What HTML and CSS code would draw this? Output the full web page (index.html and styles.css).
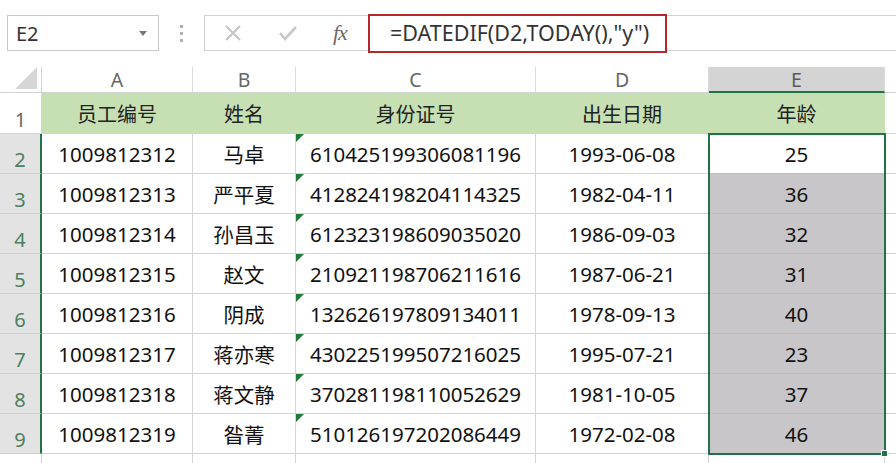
FILE: index.html
```html
<!DOCTYPE html>
<html>
<head>
<meta charset="utf-8">
<link rel="stylesheet" href="styles.css">
</head>
<body>
<div class="bar">
  <div class="namebox"><span>E2</span><svg class="dd" width="8" height="5" viewBox="0 0 8 5"><path d="M0 0h8L4 5z" fill="#777"/></svg></div>
  <div class="dots"><i></i><i></i><i></i></div>
  <div class="fbox">
    <svg class="ico x" width="18" height="18" viewBox="0 0 18 18"><path d="M2 2L16 16M16 2L2 16" stroke="#c4c4c4" stroke-width="2"/></svg>
    <svg class="ico ck" width="20" height="16" viewBox="0 0 20 16"><path d="M2 8l5 6L18 2" stroke="#c8c8c8" stroke-width="2.6" fill="none"/></svg>
    <span class="fx">fx</span>
    <div class="formula">=DATEDIF(D2,TODAY(),"y")</div>
  </div>
</div>
<div class="sheet">
  <div class="corner"><svg width="22" height="22" viewBox="0 0 22 22"><path d="M22 0V22H0z" fill="#d6d6d6"/></svg></div>
  <div class="ch">A</div><div class="ch">B</div><div class="ch">C</div><div class="ch">D</div><div class="ch sel">E</div><div class="ch end"></div>

  <div class="rh">1</div>
  <div class="c hd">员工编号</div><div class="c hd">姓名</div><div class="c hd">身份证号</div><div class="c hd">出生日期</div><div class="c hd">年龄</div><div class="c endc"></div>

  <div class="rh s">2</div><div class="c">1009812312</div><div class="c">马卓</div><div class="c t">610425199306081196</div><div class="c">1993-06-08</div><div class="c e active">25</div><div class="c endc"></div>
  <div class="rh s">3</div><div class="c">1009812313</div><div class="c">严平夏</div><div class="c t">412824198204114325</div><div class="c">1982-04-11</div><div class="c e">36</div><div class="c endc"></div>
  <div class="rh s">4</div><div class="c">1009812314</div><div class="c">孙昌玉</div><div class="c t">612323198609035020</div><div class="c">1986-09-03</div><div class="c e">32</div><div class="c endc"></div>
  <div class="rh s">5</div><div class="c">1009812315</div><div class="c">赵文</div><div class="c t">210921198706211616</div><div class="c">1987-06-21</div><div class="c e">31</div><div class="c endc"></div>
  <div class="rh s">6</div><div class="c">1009812316</div><div class="c">阴成</div><div class="c t">132626197809134011</div><div class="c">1978-09-13</div><div class="c e">40</div><div class="c endc"></div>
  <div class="rh s">7</div><div class="c">1009812317</div><div class="c">蒋亦寒</div><div class="c t">430225199507216025</div><div class="c">1995-07-21</div><div class="c e">23</div><div class="c endc"></div>
  <div class="rh s">8</div><div class="c">1009812318</div><div class="c">蒋文静</div><div class="c t">370281198110052629</div><div class="c">1981-10-05</div><div class="c e">37</div><div class="c endc"></div>
  <div class="rh s">9</div><div class="c">1009812319</div><div class="c">昝菁</div><div class="c t">510126197202086449</div><div class="c">1972-02-08</div><div class="c e last">46</div><div class="c endc"></div>

  <div class="rh"></div><div class="c"></div><div class="c"></div><div class="c"></div><div class="c"></div><div class="c"></div><div class="c endc"></div>
  <div class="range"><span class="handle"></span></div>
</div>
</body>
</html>
```

FILE: styles.css
```css
* { box-sizing: border-box; }
body {
  margin: 0;
  background: #fff;
  font-family: "Noto Sans", "Noto Sans CJK SC", sans-serif;
  color: #1a1a1a;
  width: 896px;
  height: 463px;
  overflow: hidden;
}
.bar {
  height: 67px;
  display: flex;
  align-items: flex-start;
  padding-top: 15px;
  padding-left: 7px;
}
.namebox {
  width: 152px;
  height: 36px;
  border: 1px solid #c8c8c8;
  display: flex;
  align-items: center;
  justify-content: space-between;
  padding: 0 11px 0 8px;
  font-size: 20px;
  color: #333;
}
.dd { margin-top: 1px; }
.dots {
  width: 45px;
  height: 36px;
  display: flex;
  flex-direction: column;
  align-items: center;
  justify-content: center;
  gap: 4px;
}
.dots i {
  display: block;
  width: 3px;
  height: 3px;
  background: #b0b0b0;
}
.fbox {
  flex: 1;
  height: 36px;
  border: 1px solid #d0d0d0;
  border-right: 0;
  display: flex;
  align-items: center;
  position: relative;
}
.ico.x { margin-left: 19px; }
.ico.ck { margin-left: 36px; }
.fx {
  margin-left: 35px;
  font-family: "Liberation Serif", serif;
  font-style: italic;
  font-size: 22px;
  color: #6a6a6a;
  letter-spacing: -1px;
}
.formula {
  position: absolute;
  left: 163px;
  top: -2px;
  width: 299px;
  height: 39px;
  border: 2px solid #b5262d;
  font-size: 21.5px;
  color: #333;
  padding-left: 20px;
  line-height: 34px;
  background: #fff;
}
.sheet {
  position: relative;
  display: grid;
  grid-template-columns: 42px 151px 103px 240px 173px 176px 11px;
  grid-template-rows: 26px 41px repeat(8, 40px) 20px;
}
.corner {
  border-right: 1px solid #d4d4d4;
  border-bottom: 1px solid #d4d4d4;
  display: flex;
  align-items: flex-end;
  justify-content: flex-end;
  padding: 0 4px 3px 0;
}
.ch {
  border-right: 1px solid #dadada;
  border-bottom: 1px solid #d4d4d4;
  text-align: center;
  font-size: 19.5px;
  color: #666;
  line-height: 25px;
}
.ch.sel {
  background: #d4d4d4;
  border-bottom: 2px solid #217346;
  color: #5a5a5a;
}
.ch.end { border-right: 0; }
.rh {
  border-right: 1px solid #d4d4d4;
  border-bottom: 1px solid #d4d4d4;
  font-size: 20px;
  color: #666;
  display: flex;
  align-items: flex-end;
  justify-content: center;
  line-height: 26px;
}
.rh.s {
  background: #e3e3e3;
  color: #4c8060;
  border-right: 2px solid #217346;
  border-bottom: 1px solid #cfcfcf;
}
.c {
  border-right: 1px solid #d4d4d4;
  border-bottom: 1px solid #d4d4d4;
  display: flex;
  align-items: center;
  justify-content: center;
  font-size: 20.5px;
  color: #111;
  position: relative;
}
.c.hd {
  background: #c6e0b4;
  color: #222;
  font-size: 20px;
  border-right-color: #c6e0b4;
  border-bottom-color: #c6e0b4;
}
.c.endc { border-right: 0; }
.c.t::before {
  content: "";
  position: absolute;
  left: 0;
  top: 0;
  border-top: 8px solid #1e7a34;
  border-right: 8px solid transparent;
}
.c.e {
  background: #c8c6c8;
  border-bottom-color: #bdbbbd;
}
.c.e.active { background: #fff; }
.range {
  position: absolute;
  left: 708px;
  top: 66px;
  width: 178px;
  height: 322px;
  border: 2px solid #217346;
  pointer-events: none;
}
.handle {
  position: absolute;
  right: -4px;
  bottom: -4px;
  width: 7px;
  height: 7px;
  background: #217346;
  border: 1px solid #fff;
}
```
